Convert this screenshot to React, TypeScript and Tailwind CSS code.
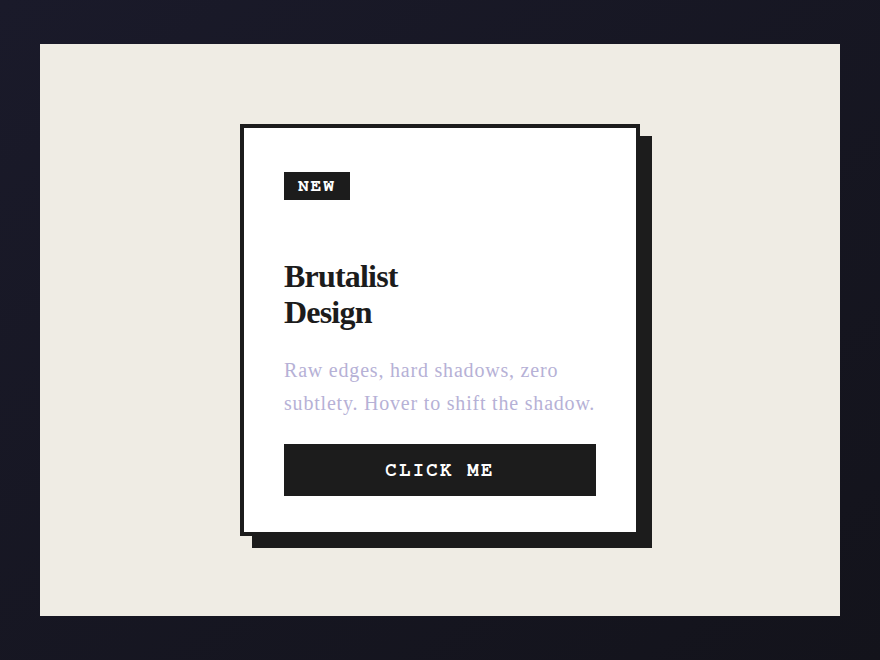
import React from 'react';

const BrutalCard: React.FC = () => {
  return (
    <div className="w-[400px] flex flex-col items-start border-4 border-[#1c1c1c] bg-white shadow-[12px_12px_0_0_#1c1c1c] px-10 pt-[44px] pb-[36px]">
      <span className="block bg-[#1c1c1c] text-white font-['Nimbus_Mono_PS','FreeMono','Nimbus_Mono_L','TeX_Gyre_Cursor','Courier_10_Pitch',monospace] text-[18px] font-bold tracking-[0.1em] leading-[18px] px-[14px] py-[5px]">
        NEW
      </span>
      <h2 className="mt-[59px] font-['Liberation_Serif','Times_New_Roman',serif] text-[32px] font-bold leading-[1.1] tracking-tight text-[#1c1c1c]">
        Brutalist
        <br />
        Design
      </h2>
      <p className="mt-6 font-['Liberation_Serif','Times_New_Roman',serif] text-[20px] leading-[1.65] tracking-[0.04em] text-[#b6b1d6]">
        Raw edges, hard shadows, zero subtlety. Hover to shift the shadow.
      </p>
      <button className="mt-6 w-full h-[52px] pt-1 bg-[#1c1c1c] text-white font-['Nimbus_Mono_PS','FreeMono','Nimbus_Mono_L','TeX_Gyre_Cursor','Courier_10_Pitch',monospace] text-[19px] font-bold tracking-[0.12em] uppercase">
        Click me
      </button>
    </div>
  );
};

export default function App() {
  return (
    <div className="w-[880px] h-[660px] bg-gradient-to-br from-[#1a1a2a] to-[#13131b] px-10 py-[44px]">
      <div className="w-full h-full bg-[#efece4] flex items-center justify-center">
        <BrutalCard />
      </div>
    </div>
  );
}
